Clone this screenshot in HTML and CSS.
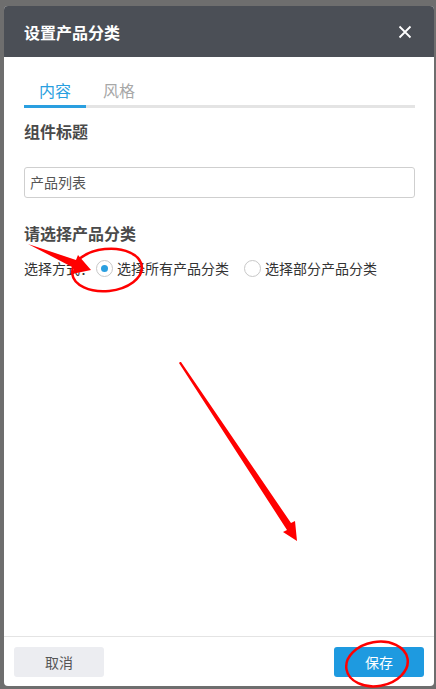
FILE: index.html
```html
<!DOCTYPE html>
<html lang="zh">
<head>
<meta charset="utf-8">
<link rel="stylesheet" href="styles.css">
</head>
<body>
<div class="modal">
  <div class="modal-header">
    <span class="modal-title">设置产品分类</span>
    <svg class="close" width="14" height="14" viewBox="0 0 14 14"><path d="M1.5 1.5L12.5 12.5M12.5 1.5L1.5 12.5" stroke="#fff" stroke-width="1.8" fill="none"/></svg>
  </div>
  <div class="modal-body">
    <div class="tabs">
      <div class="tab active">内容</div>
      <div class="tab">风格</div>
    </div>
    <div class="section-title">组件标题</div>
    <div class="input">产品列表</div>
    <div class="section-title second">请选择产品分类</div>
    <div class="radio-row">
      <span class="radio-label">选择方式：</span>
      <span class="radio checked"></span>
      <span class="option">选择所有产品分类</span>
      <span class="radio"></span>
      <span class="option">选择部分产品分类</span>
    </div>
  </div>
  <div class="modal-footer">
    <button class="btn cancel">取消</button>
    <button class="btn save">保存</button>
  </div>
</div>
<svg class="annot" width="436" height="689" viewBox="0 0 436 689">
  <ellipse cx="107" cy="270" rx="35" ry="21" fill="none" stroke="#f00" stroke-width="2.5" transform="rotate(-6 107 270)"/>
  <polygon points="28,244 76,260 78,255 91,270 72,274 74,268" fill="#f00"/>
  <polygon points="180,362 181,362 291,523 295,521 297,541 283,532 287,530 179,363" fill="#f00"/>
  <ellipse cx="377" cy="664" rx="31" ry="22" fill="none" stroke="#f00" stroke-width="2.5" transform="rotate(-10 377 664)"/>
</svg>
</body>
</html>
```
FILE: styles.css
```css
html, body {
  margin: 0;
  padding: 0;
}
body {
  width: 436px;
  height: 689px;
  background: #6e6e6e;
  font-family: "Noto Sans CJK SC", "Liberation Sans", sans-serif;
  position: relative;
  overflow: hidden;
}
.modal {
  position: absolute;
  left: 4px;
  top: 6px;
  width: 430px;
  height: 680px;
  background: #fff;
  border-radius: 4px;
  display: flex;
  flex-direction: column;
  overflow: hidden;
}
.modal-header {
  height: 51px;
  background: #4b4f56;
  display: flex;
  align-items: center;
  justify-content: space-between;
  padding: 0 22px 0 20px;
  flex-shrink: 0;
}
.modal-title {
  color: #fff;
  font-size: 16px;
  font-weight: bold;
}
.modal-body {
  flex: 1;
  padding: 20px 19px 0 20px;
}
.tabs {
  display: flex;
  border-bottom: 3px solid #e4e4e4;
  height: 28px;
}
.tab {
  font-size: 16px;
  color: #a8a8a8;
  padding: 0;
  white-space: nowrap;
  line-height: 26px;
  height: 28px;
  box-sizing: border-box;
  width: 66px;
  text-align: center;
}
.tab.active {
  color: #2a9fe0;
  border-bottom: 3px solid #2a9fe0;
  height: 31px;
  width: 62px;
}
.section-title {
  font-size: 16px;
  font-weight: bold;
  color: #4a4a4a;
  margin-top: 11px;
  line-height: 24px;
}
.input {
  margin-top: 24px;
  height: 31px;
  border: 1px solid #cfcfcf;
  border-radius: 3px;
  box-sizing: border-box;
  padding-left: 5px;
  font-size: 14px;
  line-height: 29px;
  color: #555;
}
.section-title.second {
  margin-top: 23px;
}
.radio-row {
  display: flex;
  align-items: center;
  margin-top: 12px;
  font-size: 14px;
  color: #333;
  height: 22px;
  white-space: nowrap;
}
.radio {
  width: 17px;
  height: 17px;
  border: 1px solid #c8c8c8;
  border-radius: 50%;
  box-sizing: border-box;
  margin: 0 4px 0 0;
  position: relative;
  background: #fff;
}
.radio.checked::after {
  content: "";
  position: absolute;
  left: 4px;
  top: 4px;
  width: 7px;
  height: 7px;
  border-radius: 50%;
  background: #2a9fe0;
}
.radio-label {
  width: 72px;
}
.option {
  margin-right: 15px;
}
.modal-footer {
  height: 49px;
  border-top: 1px solid #e4e4e4;
  display: flex;
  justify-content: space-between;
  align-items: center;
  padding: 0 10px;
  flex-shrink: 0;
}
.btn {
  width: 90px;
  height: 30px;
  border: none;
  border-radius: 3px;
  font-family: "Noto Sans CJK SC", "Liberation Sans", sans-serif;
  font-size: 14px;
}
.btn.cancel {
  background: #ecedf1;
  color: #555;
}
.btn.save {
  background: #1e9ae0;
  color: #fff;
}
.annot {
  position: absolute;
  left: 0;
  top: 0;
}
```
